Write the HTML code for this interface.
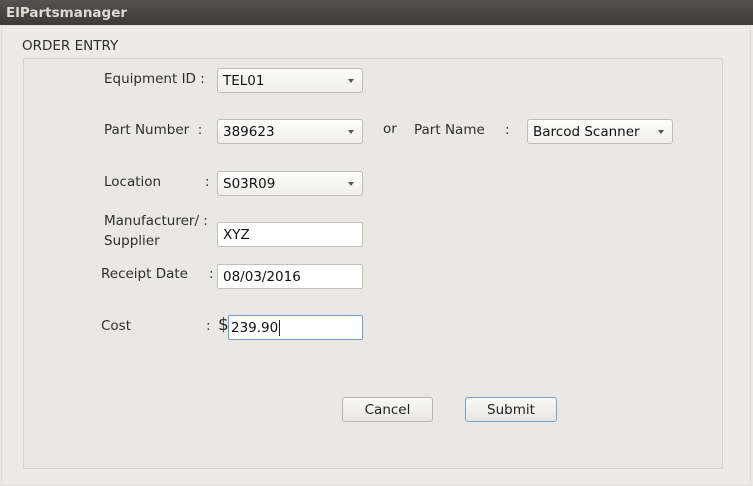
<!DOCTYPE html>
<html><head><meta charset="utf-8"><style>
*{margin:0;padding:0;box-sizing:border-box}
body{width:753px;height:486px;overflow:hidden;background:#edebe8;font-family:"DejaVu Sans","Liberation Sans",sans-serif;font-size:13.5px;color:#2e2e2e;position:relative}
.title{position:absolute;left:0;top:0;width:753px;height:25px;background:linear-gradient(#55534d,#3c3b37);color:#dfdbd2;font-weight:bold;font-size:13.5px;padding:5px 0 0 6px}
.win{position:absolute;left:1px;top:25px;width:750px;height:460px;background:#edebe8;border:1px solid #e2dfda}
.panel{position:absolute;left:23px;top:58px;width:700px;height:411px;border:1px solid #d8d5d0;background:#eae8e5}
.t{position:absolute;white-space:nowrap}
.box{position:absolute;height:25px;background:#fff;border:1px solid #c4c0ba;border-radius:2px;padding:4px 0 0 5px;color:#111}
.combo{background:linear-gradient(#fdfdfc,#f0efed);border-color:#bfbbb5;border-radius:3px}
.combo:after{content:"";position:absolute;right:8px;top:10px;border-left:3.5px solid transparent;border-right:3.5px solid transparent;border-top:4px solid #555}
.btn{position:absolute;height:25px;border:1px solid #b9b5ae;border-radius:3px;background:linear-gradient(#f9f9f8,#e8e6e3);text-align:center;padding-top:4px;color:#222}
</style></head><body>
<div class="title">ElPartsmanager</div>
<div class="win"></div>
<div class="t" style="left:22px;top:38px">ORDER ENTRY</div>
<div class="panel"></div>

<div class="t" style="left:104px;top:71px">Equipment ID :</div>
<div class="box combo" style="left:217px;top:68px;width:146px">TEL01</div>

<div class="t" style="left:104px;top:122px">Part Number&nbsp;&nbsp;:</div>
<div class="box combo" style="left:217px;top:119px;width:146px">389623</div>
<div class="t" style="left:383px;top:121px">or</div>
<div class="t" style="left:414px;top:122px">Part Name</div>
<div class="t" style="left:505px;top:122px">:</div>
<div class="box combo" style="left:527px;top:119px;width:146px">Barcod Scanner</div>

<div class="t" style="left:104px;top:174px">Location</div>
<div class="t" style="left:205px;top:174px">:</div>
<div class="box combo" style="left:217px;top:171px;width:146px">S03R09</div>

<div class="t" style="left:104px;top:213px">Manufacturer/ :</div>
<div class="t" style="left:104px;top:233px">Supplier</div>
<div class="box" style="left:217px;top:222px;width:146px">XYZ</div>

<div class="t" style="left:101px;top:266px">Receipt Date</div>
<div class="t" style="left:209px;top:266px">:</div>
<div class="box" style="left:217px;top:264px;width:146px">08/03/2016</div>

<div class="t" style="left:101px;top:318px">Cost</div>
<div class="t" style="left:206px;top:318px">:</div>
<div class="t" style="left:218px;top:315px;font-size:17px">$</div>
<div class="box" style="left:228px;top:315px;width:135px;border-color:#6f9ac9;padding-left:2px">239.90<span style="border-left:1px solid #222;margin-left:1px"></span></div>

<div class="btn" style="left:342px;top:397px;width:91px">Cancel</div>
<div class="btn" style="left:465px;top:397px;width:92px;border-color:#7d9fc3">Submit</div>
</body></html>
